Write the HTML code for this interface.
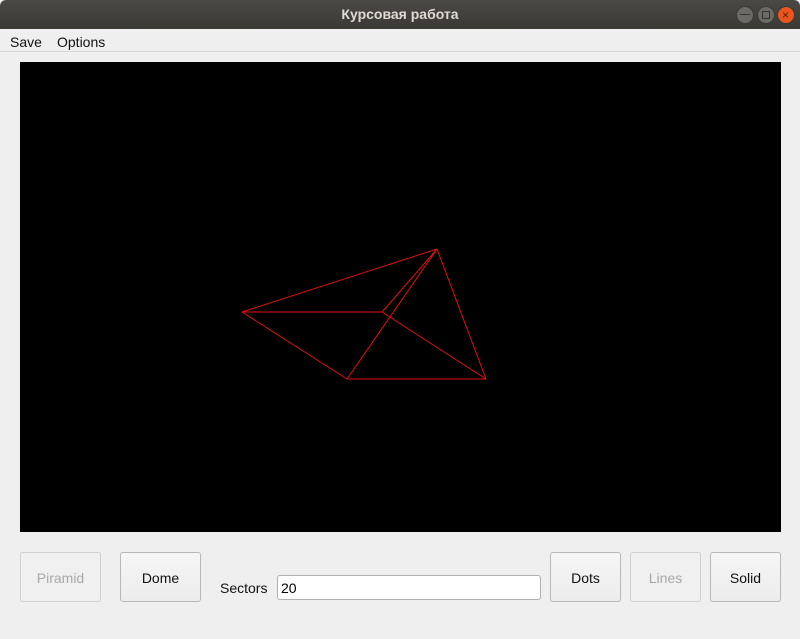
<!DOCTYPE html>
<html><head><style>
body{margin:0;width:800px;height:639px;background:#efefef;font-family:"Liberation Sans","DejaVu Sans",sans-serif;position:relative;overflow:hidden}
.title{position:absolute;left:0;top:0;width:800px;height:29px;background:linear-gradient(#4a4944,#3a3935);color:#dfdbd2;font-weight:bold;font-size:14px;text-align:center;line-height:29px;border-radius:6px 6px 0 0}
.c{position:absolute;top:6px;width:18px;height:18px;border-radius:50%;background:#6b6a65;border:1px solid #3a3935;box-sizing:border-box}
.menu{position:absolute;top:29px;left:0;width:800px;height:22px;border-bottom:1px solid #d6d6d6;font-size:14px;color:#111}
.menu span{position:absolute;top:5px}
.canvas{position:absolute;left:20px;top:62px;width:761px;height:470px;background:#000}
.btn{position:absolute;top:552px;height:50px;border:1px solid #b8b8b8;border-radius:3px;background:linear-gradient(#f6f6f6,#ececec);box-sizing:border-box;font-size:14px;text-align:center;line-height:50px;color:#111}
.dis{color:#a8a8a8;border-color:#d0d0d0;background:#f0f0f0}
</style></head><body>
<div class="title">Курсовая работа</div>
<div class="c" style="left:736px"></div><div class="c" style="left:757px"></div>
<div class="c" style="left:777px;background:#e9541f"></div>
<div style="position:absolute;left:740px;top:14px;width:10px;height:1px;background:#333"></div>
<div style="position:absolute;left:762px;top:11px;width:8px;height:8px;border:1px solid #333;box-sizing:border-box"></div>
<div style="position:absolute;left:782px;top:6px;font-size:12px;color:#5a1a00;line-height:18px">×</div>
<div class="menu"><span style="left:10px">Save</span><span style="left:57px">Options</span></div>
<div class="canvas"><svg width="761" height="470" viewBox="20 62 761 470" style="display:block">
<g stroke="#e01010" stroke-width="1" fill="none">
<path d="M242 312L437 249M242 312L382 312M242 312L347 379M347 379L486 379M486 379L437 249M382 312L437 249M347 379L437 249M382 312L486 379"/>
</g></svg></div>
<div class="btn dis" style="left:20px;width:81px">Piramid</div>
<div class="btn" style="left:120px;width:81px">Dome</div>
<div style="position:absolute;left:220px;top:580px;font-size:14px;color:#111">Sectors</div>
<div style="position:absolute;left:277px;top:575px;width:264px;height:25px;border:1px solid #b0b0b0;border-radius:3px;background:#fff;box-sizing:border-box;font-size:14px;line-height:25px;padding-left:3px">20</div>
<div class="btn" style="left:550px;width:71px">Dots</div>
<div class="btn dis" style="left:630px;width:71px">Lines</div>
<div class="btn" style="left:710px;width:71px">Solid</div>
</body></html>
